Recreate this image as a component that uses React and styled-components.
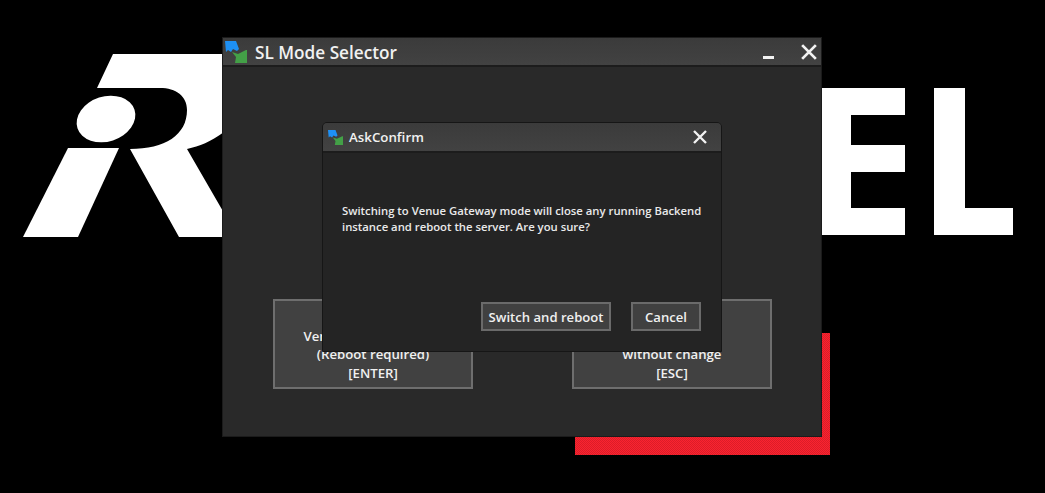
import React from "react";
import styled, { createGlobalStyle } from "styled-components";

const Global = createGlobalStyle`
  html, body { margin: 0; padding: 0; background: #000; }
  body { width: 1045px; height: 493px; overflow: hidden; font-family: "Open Sans", "Noto Sans", sans-serif; }
  #root { width: 100%; height: 100%; }
`;

const Desktop = styled.div`
  position: relative;
  width: 1045px;
  height: 493px;
  background: #000;
  display: flex;
  justify-content: center;
  align-items: flex-start;
  padding: 37px 1px 0 0;
  box-sizing: border-box;
`;

const Wallpaper = styled.svg`
  position: absolute;
  inset: 0;
`;

const Window = styled.div`
  position: relative;
  width: 600px;
  height: 400px;
  box-sizing: border-box;
  background: #292929;
  border: 1px solid #1b1b1b;
  display: flex;
  flex-direction: column;
`;

const TitleBar = styled.div`
  height: 27px;
  flex: none;
  display: flex;
  align-items: center;
  background: linear-gradient(#3b3b3b, #424242);
  border-bottom: 2px solid #1c1c1c;
  color: #f1f1f1;
`;

const AppIcon = styled.svg`
  flex: none;
  margin-left: ${(p) => p.$ml}px;
  margin-right: ${(p) => p.$mr}px;
`;

const Title = styled.span`
  flex: 1;
  font-size: ${(p) => p.$size}px;
  padding-top: ${(p) => p.$pt || 0}px;
  font-weight: 600;
  white-space: nowrap;
`;

const WinButton = styled.svg`
  flex: none;
  margin-right: ${(p) => p.$mr}px;
`;

const Choices = styled.div`
  flex: 1;
  display: flex;
  justify-content: space-between;
  align-items: flex-start;
  padding: 232px 49px 0 50px;
`;

const Choice = styled.div`
  width: 200px;
  height: 90px;
  box-sizing: border-box;
  background: #414141;
  border: 2px solid #6e6e6e;
  color: #f0f0f0;
  font-size: 13.2px;
  font-weight: 600;
  line-height: 18.5px;
  text-align: center;
  display: flex;
  flex-direction: column;
  justify-content: flex-end;
  padding-bottom: 5px;
`;

const Dialog = styled.div`
  position: absolute;
  left: 99px;
  top: 84px;
  width: 400px;
  height: 230px;
  box-sizing: border-box;
  background: #242424;
  border: 1px solid #161616;
  border-radius: 5px 5px 0 0;
  display: flex;
  flex-direction: column;
`;

const DialogBar = styled(TitleBar)`
  height: 28px;
  border-radius: 4px 4px 0 0;
`;

const Message = styled.p`
  margin: 0;
  padding: 50px 8px 0 19px;
  flex: 1;
  color: #eaeaea;
  font-size: 11.3px;
  font-weight: 600;
  line-height: 16px;
`;

const Actions = styled.div`
  display: flex;
  justify-content: flex-end;
  gap: 20px;
  padding: 0 20px 20px 0;
`;

const Action = styled.div`
  height: 29px;
  box-sizing: border-box;
  width: ${(p) => p.$w}px;
  background: #404040;
  border: 2px solid #6a6a6a;
  color: #f0f0f0;
  font-size: 13.1px;
  font-weight: 600;
  display: flex;
  align-items: center;
  justify-content: center;
  white-space: nowrap;
`;

const Arrows = ({ size, ml, mr }) => (
  <AppIcon $ml={ml} $mr={mr} width={size} height={size} viewBox="0 0 22 22">
    <path d="M0 0H11L14 8 12 10 8 8 6 11 3 9 1 11z" fill="#1e90f4" />
    <path d="M7 11L13 13 21 9 22 9V22H10L11 16z" fill="#43a047" />
  </AppIcon>
);

const CloseIcon = ({ size, mr }) => (
  <WinButton $mr={mr} width={size} height={size} viewBox="0 0 14 14">
    <path d="M1 1l12 12M13 1L1 13" stroke="#f2f2f2" strokeWidth="2.4" />
  </WinButton>
);

export default function App() {
  return (
    <Desktop>
      <Global />
      <Wallpaper width="1045" height="493" viewBox="0 0 1045 493">
        <defs>
          <pattern id="dither" width="2" height="2" patternUnits="userSpaceOnUse">
            <rect width="2" height="2" fill="#fa2430" />
            <rect width="1" height="1" fill="#dc1c28" />
            <rect x="1" y="1" width="1" height="1" fill="#dc1c28" />
          </pattern>
        </defs>
        <rect x="575" y="333" width="255" height="122" fill="url(#dither)" />
        <g fill="#fff">
          <ellipse cx="106" cy="119" rx="30" ry="22.5" transform="rotate(-18 106 119)" />
          <path d="M68 148H119L78 237H23z" />
          <path d="M113 54H224V132C210 142 200 146 187 149L224 213V237H179L130 149C165 149 187 135 187 110 187 96 176 88 160 88H97z" />
          <path d="M820 88H905V115H851V145H905V172H851V208H905V235H820z" />
          <path d="M934 88H965V208H1013V235H934z" />
        </g>
      </Wallpaper>
      <Window>
        <TitleBar>
          <Arrows size={22} ml={2} mr={8} />
          <Title $size={17.2} $pt={2}>SL Mode Selector</Title>
          <WinButton $mr={27} width="11" height="14" viewBox="0 0 11 14">
            <rect y="11" width="11" height="3" fill="#f2f2f2" />
          </WinButton>
          <CloseIcon size={16} mr={4} />
        </TitleBar>
        <Choices>
          <Choice>
            <span>Venue Gateway mode</span>
            <span>(Reboot required)</span>
            <span>[ENTER]</span>
          </Choice>
          <Choice>
            <span>Exit</span>
            <span>without change</span>
            <span>[ESC]</span>
          </Choice>
        </Choices>
        <Dialog>
          <DialogBar>
            <Arrows size={15} ml={5} mr={6} />
            <Title $size={13.3}>AskConfirm</Title>
            <CloseIcon size={14} mr={14} />
          </DialogBar>
          <Message>
            Switching to Venue Gateway mode will close any running Backend instance and reboot the server. Are you sure?
          </Message>
          <Actions>
            <Action $w={130}>Switch and reboot</Action>
            <Action $w={70}>Cancel</Action>
          </Actions>
        </Dialog>
      </Window>
    </Desktop>
  );
}
